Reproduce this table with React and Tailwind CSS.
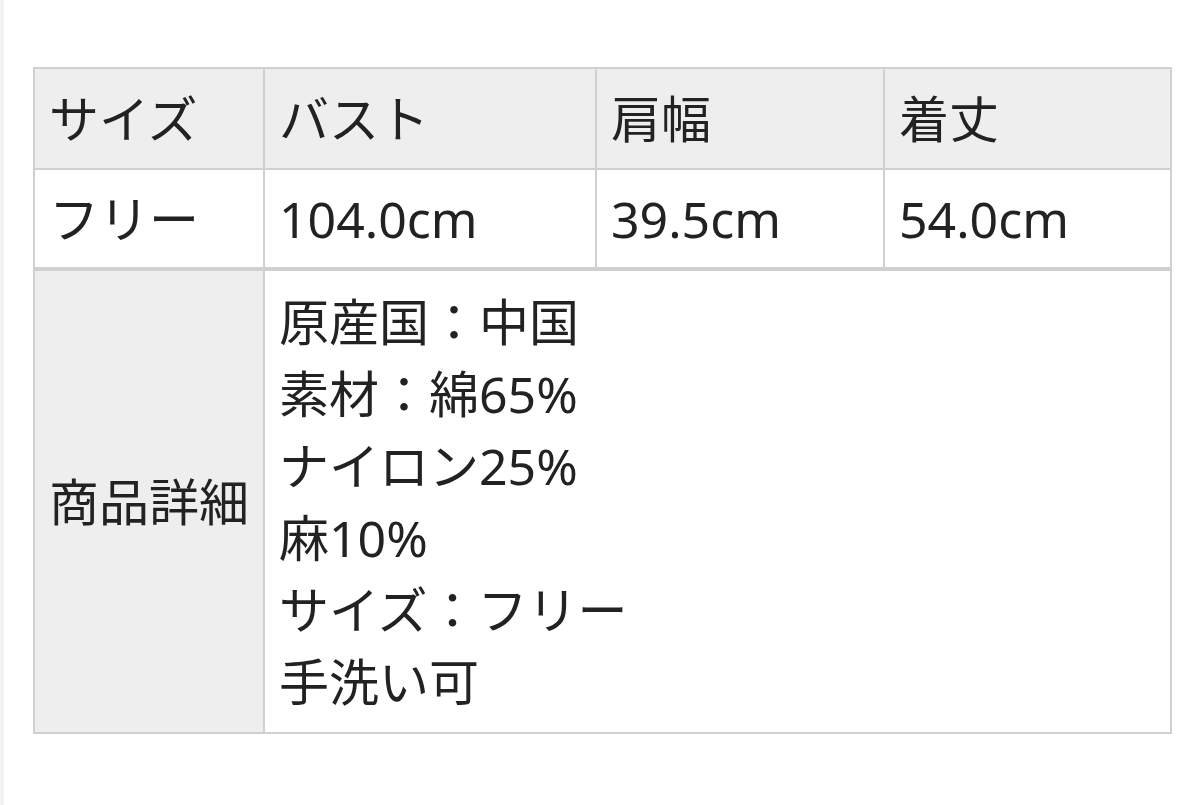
import React from 'react';

const sizeHead = ['サイズ', 'バスト', '肩幅', '着丈'];
const sizeRow = ['フリー', '104.0cm', '39.5cm', '54.0cm'];
const details = ['原産国：中国', '素材：綿65%', 'ナイロン25%', '麻10%', 'サイズ：フリー', '手洗い可'];

export default function App() {
  return (
    <div className="flex w-full h-[805px] bg-white text-[#222] font-['Noto_Sans','Noto_Sans_CJK_JP',sans-serif]">
      <div className="w-[4px] bg-[#f2f2f2]"></div>
      <div className="pt-[67px] pl-[29px]">
        <table className="table-fixed border-collapse w-[1137px] text-[50px] leading-[72px]">
          <colgroup>
            <col className="w-[230px]" />
            <col className="w-[332px]" />
            <col className="w-[288px]" />
            <col className="w-[287px]" />
          </colgroup>
          <tbody>
            <tr className="h-[101px] bg-[#eeeeee]">
              {sizeHead.map((t) => (
                <td key={t} className="border-2 border-[#d0d0d0] pl-[14px] align-middle whitespace-nowrap">{t}</td>
              ))}
            </tr>
            <tr className="h-[100px] bg-white">
              {sizeRow.map((t) => (
                <td key={t} className="border-2 border-[#d0d0d0] pl-[14px] align-middle whitespace-nowrap">{t}</td>
              ))}
            </tr>
            <tr className="h-[464px]">
              <td className="border-2 border-t-4 border-[#d0d0d0] bg-[#eeeeee] pl-[14px] align-middle whitespace-nowrap">商品詳細</td>
              <td colSpan={3} className="border-2 border-t-4 border-[#d0d0d0] bg-white pl-[14px] align-middle">
                {details.map((d) => (
                  <div key={d}>{d}</div>
                ))}
              </td>
            </tr>
          </tbody>
        </table>
      </div>
    </div>
  );
}
